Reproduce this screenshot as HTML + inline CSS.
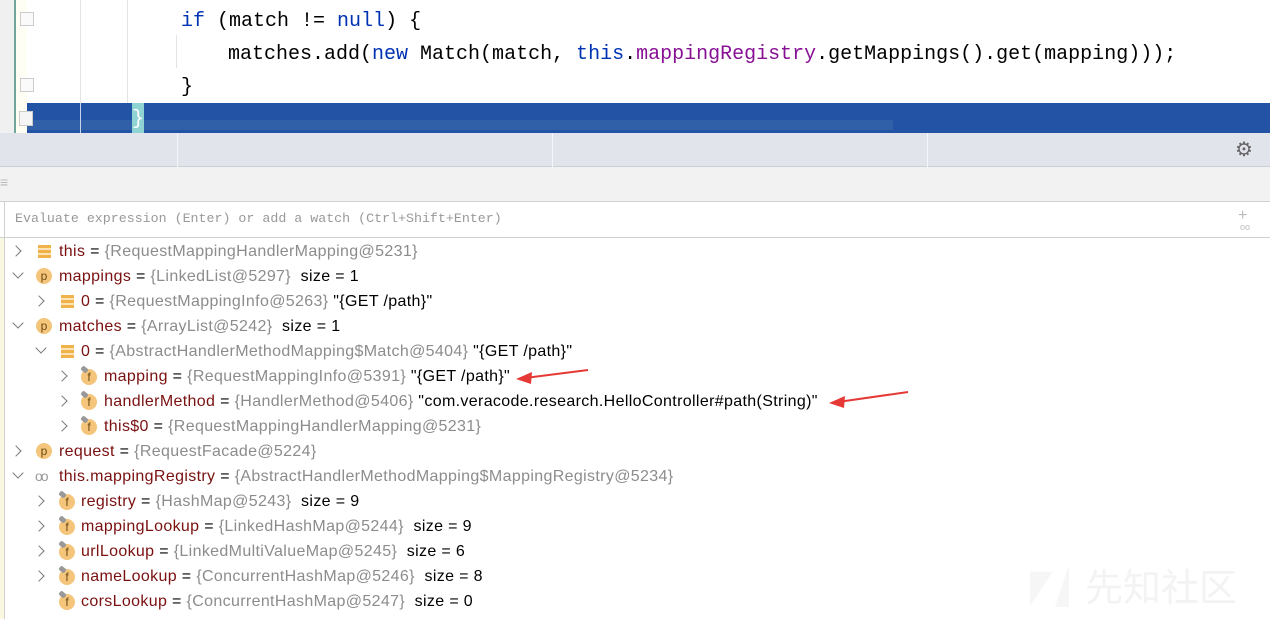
<!DOCTYPE html>
<html><head><meta charset="utf-8"><style>
*{margin:0;padding:0;box-sizing:border-box}
body{width:1270px;height:619px;overflow:hidden;background:#fff;position:relative;font-family:"Liberation Sans",sans-serif}
.abs{position:absolute}
.code{position:absolute;font-family:"Liberation Mono",monospace;font-size:20px;color:#000;white-space:pre;line-height:33px}
.kw{color:#0033b3}
.fld{color:#871094}
.row{position:absolute;left:0;height:25px;line-height:25px;font-size:16px;letter-spacing:0.35px;white-space:pre;color:#000}
.n{color:#7a1010}
.v{color:#8c8c8c}
.arr{position:absolute;width:8px;height:8px;border-right:1.6px solid #777;border-bottom:1.6px solid #777}
.ar{transform:rotate(-45deg)}
.ad{transform:rotate(45deg)}
.ic{position:absolute;width:16px;height:16px;border-radius:50%;background:#f4c57a;color:#6b4a14;font-size:12px;line-height:16px;text-align:center;font-style:normal;letter-spacing:0}
.lst{position:absolute;width:13px;height:13px;background:repeating-linear-gradient(#f0b24a 0 3px,#fbe3b6 3px 5px)}
.pin{position:absolute;width:7px;height:5px;background:#999;border-radius:2px;transform:rotate(40deg)}
</style></head><body>
<div class="abs" style="left:0;top:0;width:14px;height:133px;background:#f0f0f0"></div>
<div class="abs" style="left:14px;top:0;width:2px;height:133px;background:#6fa59b"></div>
<div class="abs" style="left:16px;top:0;width:11px;height:133px;background:#fffef4"></div>
<div class="abs" style="left:80px;top:0;width:1px;height:103px;background:#e4e4e4"></div>
<div class="abs" style="left:127px;top:0;width:1px;height:103px;background:#e4e4e4"></div>
<div class="abs" style="left:176px;top:35px;width:1px;height:33px;background:#e4e4e4"></div>
<div class="abs" style="left:20px;top:12px;width:14px;height:14px;border:1px solid #ccc;background:#fafafa"></div>
<div class="abs" style="left:20px;top:78px;width:14px;height:14px;border:1px solid #ccc;background:#fafafa"></div>
<div class="code" style="left:181px;top:5px"><span class="kw">if</span> (match != <span class="kw">null</span>) {</div>
<div class="code" style="left:228px;top:38px">matches.add(<span class="kw">new</span> Match(match, <span class="kw">this</span>.<span class="fld">mappingRegistry</span>.getMappings().get(mapping)));</div>
<div class="code" style="left:181px;top:71px">}</div>
<div class="abs" style="left:27px;top:103px;width:1243px;height:30px;background:#2353a5"></div>
<div class="abs" style="left:27px;top:120px;width:866px;height:10px;background:#3060a8"></div>
<div class="abs" style="left:80px;top:103px;width:1px;height:30px;background:#c8d4ea"></div>
<div class="abs" style="left:132px;top:103px;width:12px;height:30px;background:#8fd3d3;color:#fff;font-family:'Liberation Mono';font-size:20px;line-height:33px">}</div>
<div class="abs" style="left:19px;top:111px;width:14px;height:15px;border:1px solid #ccc;background:#f5f5f5"></div>
<div class="abs" style="left:0;top:133px;width:1270px;height:34px;background:#e1e4ea;border-bottom:1px solid #cdd0d6"></div>
<div class="abs" style="left:177px;top:133px;width:1px;height:34px;background:#f4f5f8"></div>
<div class="abs" style="left:552px;top:133px;width:1px;height:34px;background:#f4f5f8"></div>
<div class="abs" style="left:927px;top:133px;width:1px;height:34px;background:#f4f5f8"></div>
<div class="abs" style="left:1235px;top:139px;font-size:20px;color:#666;line-height:22px">&#9881;</div>
<div class="abs" style="left:0;top:167px;width:1270px;height:35px;background:#f2f2f2;border-bottom:1px solid #d0d0d0"></div>
<div class="abs" style="left:0;top:174px;font-size:14px;color:#bbb">&#8801;</div>
<div class="abs" style="left:0;top:202px;width:1270px;height:36px;background:#fff;border-bottom:1px solid #d0d0d0"></div>
<div class="abs" style="left:4px;top:202px;width:1px;height:417px;background:#d0d0d0"></div>
<div class="abs" style="left:0;top:238px;width:4px;height:381px;background:#fbf8e2"></div>
<div class="abs" style="left:15px;top:210px;font-family:'Liberation Mono',monospace;font-size:13.3px;color:#999;line-height:18px">Evaluate expression (Enter) or add a watch (Ctrl+Shift+Enter)</div>
<div class="abs" style="left:1238px;top:208px;font-size:16px;color:#bbb;line-height:16px">+</div>
<div class="abs" style="left:1240px;top:222px;font-size:9px;color:#bbb">oo</div>
<div class="row" style="top:239px"><i class="arr ar" style="left:12px;top:8px"></i><i class="lst" style="left:38px;top:6px"></i><span style="position:absolute;left:59px"><span class="n">this</span> = <span class="v">{RequestMappingHandlerMapping@5231}</span></span></div>
<div class="row" style="top:264px"><i class="arr ad" style="left:14px;top:5px"></i><i class="ic" style="left:36px;top:4px">p</i><span style="position:absolute;left:59px"><span class="n">mappings</span> = <span class="v">{LinkedList@5297}</span>  size = 1</span></div>
<div class="row" style="top:289px"><i class="arr ar" style="left:35px;top:8px"></i><i class="lst" style="left:61px;top:6px"></i><span style="position:absolute;left:81px"><span class="n">0</span> = <span class="v">{RequestMappingInfo@5263}</span> "{GET /path}"</span></div>
<div class="row" style="top:314px"><i class="arr ad" style="left:14px;top:5px"></i><i class="ic" style="left:36px;top:4px">p</i><span style="position:absolute;left:59px"><span class="n">matches</span> = <span class="v">{ArrayList@5242}</span>  size = 1</span></div>
<div class="row" style="top:339px"><i class="arr ad" style="left:37px;top:5px"></i><i class="lst" style="left:61px;top:6px"></i><span style="position:absolute;left:81px"><span class="n">0</span> = <span class="v">{AbstractHandlerMethodMapping$Match@5404}</span> "{GET /path}"</span></div>
<div class="row" style="top:364px"><i class="arr ar" style="left:58px;top:8px"></i><i class="ic" style="left:81px;top:5px">f</i><i class="pin" style="left:81px;top:3px"></i><span style="position:absolute;left:104px"><span class="n">mapping</span> = <span class="v">{RequestMappingInfo@5391}</span> "{GET /path}"</span></div>
<div class="row" style="top:389px"><i class="arr ar" style="left:58px;top:8px"></i><i class="ic" style="left:81px;top:5px">f</i><i class="pin" style="left:81px;top:3px"></i><span style="position:absolute;left:104px"><span class="n">handlerMethod</span> = <span class="v">{HandlerMethod@5406}</span> "com.veracode.research.HelloController#path(String)"</span></div>
<div class="row" style="top:414px"><i class="arr ar" style="left:58px;top:8px"></i><i class="ic" style="left:81px;top:5px">f</i><i class="pin" style="left:81px;top:3px"></i><span style="position:absolute;left:104px"><span class="n">this$0</span> = <span class="v">{RequestMappingHandlerMapping@5231}</span></span></div>
<div class="row" style="top:439px"><i class="arr ar" style="left:12px;top:8px"></i><i class="ic" style="left:36px;top:4px">p</i><span style="position:absolute;left:59px"><span class="n">request</span> = <span class="v">{RequestFacade@5224}</span></span></div>
<div class="row" style="top:464px"><i class="arr ad" style="left:14px;top:5px"></i><span style="position:absolute;left:35px;color:#999;font-size:14px;letter-spacing:-2px">oo</span><span style="position:absolute;left:59px"><span class="n">this.mappingRegistry</span> = <span class="v">{AbstractHandlerMethodMapping$MappingRegistry@5234}</span></span></div>
<div class="row" style="top:489px"><i class="arr ar" style="left:35px;top:8px"></i><i class="ic" style="left:59px;top:5px">f</i><i class="pin" style="left:59px;top:3px"></i><span style="position:absolute;left:81px"><span class="n">registry</span> = <span class="v">{HashMap@5243}</span>  size = 9</span></div>
<div class="row" style="top:514px"><i class="arr ar" style="left:35px;top:8px"></i><i class="ic" style="left:59px;top:5px">f</i><i class="pin" style="left:59px;top:3px"></i><span style="position:absolute;left:81px"><span class="n">mappingLookup</span> = <span class="v">{LinkedHashMap@5244}</span>  size = 9</span></div>
<div class="row" style="top:539px"><i class="arr ar" style="left:35px;top:8px"></i><i class="ic" style="left:59px;top:5px">f</i><i class="pin" style="left:59px;top:3px"></i><span style="position:absolute;left:81px"><span class="n">urlLookup</span> = <span class="v">{LinkedMultiValueMap@5245}</span>  size = 6</span></div>
<div class="row" style="top:564px"><i class="arr ar" style="left:35px;top:8px"></i><i class="ic" style="left:59px;top:5px">f</i><i class="pin" style="left:59px;top:3px"></i><span style="position:absolute;left:81px"><span class="n">nameLookup</span> = <span class="v">{ConcurrentHashMap@5246}</span>  size = 8</span></div>
<div class="row" style="top:589px"><i class="ic" style="left:59px;top:5px">f</i><i class="pin" style="left:59px;top:3px"></i><span style="position:absolute;left:81px"><span class="n">corsLookup</span> = <span class="v">{ConcurrentHashMap@5247}</span>  size = 0</span></div>
<svg class="abs" style="left:0;top:0" width="1270" height="619">
<path d="M588 370 L525 378" stroke="#e53935" stroke-width="2"/><path d="M516 379 L532 372 L531 384Z" fill="#e53935"/>
<path d="M908 392 L838 402" stroke="#e53935" stroke-width="2"/><path d="M829 403 L845 396 L844 408Z" fill="#e53935"/>
</svg>
<div class="abs" style="left:1085px;top:562px;font-family:'Noto Sans CJK SC',sans-serif;font-size:38px;color:#f3f3f3;line-height:46px">先知社区</div>
<div class="abs" style="left:1030px;top:568px;width:38px;height:38px;background:#f6f6f6;clip-path:polygon(0 10%,60% 10%,0 100%)"></div>
<div class="abs" style="left:1055px;top:565px;width:14px;height:42px;background:#f6f6f6;clip-path:polygon(100% 0,100% 100%,0 100%)"></div>
</body></html>
